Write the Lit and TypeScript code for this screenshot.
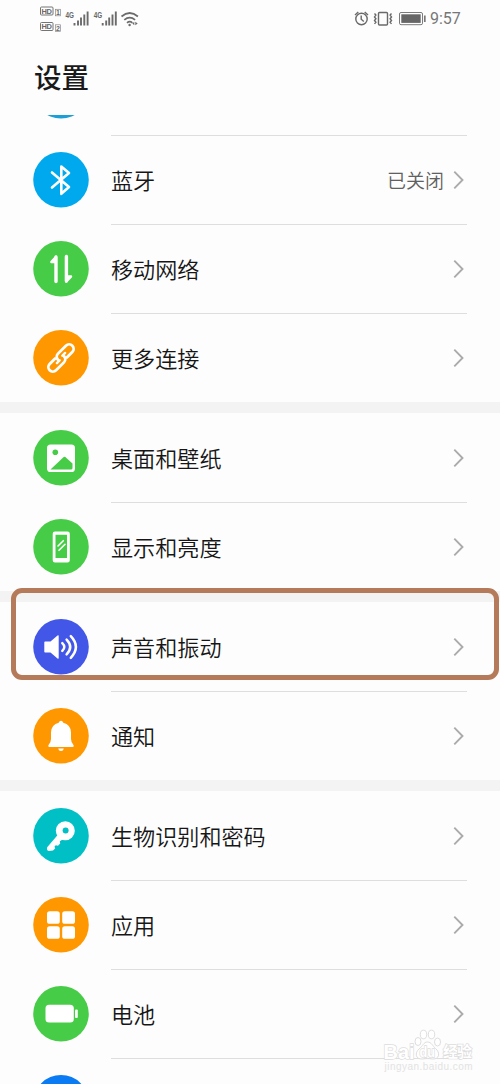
import { LitElement, html, svg, css, nothing } from "lit";
import { customElement, property } from "lit/decorators.js";

const glyphs: Record<string, unknown> = {
  none: nothing,
  bluetooth: svg`<path d="M19 20.5 36 35 28.3 41.8V14.5L36 21 19 35.5" fill="none" stroke="#fff" stroke-width="2.6" stroke-linejoin="round" stroke-linecap="round"/>`,
  mobile: svg`<path d="M23 16V40.500M33.400 15.500V40" fill="none" stroke="#fff" stroke-width="3.400" stroke-linecap="round"/><path d="M17.200 21.300Q17 20.500 17.800 19.800L22.400 14.800Q23.500 14 24 15V22.200H18.200Q17.400 22.200 17.200 21.300ZM39.200 35.200Q39.400 36 38.600 36.700L34 41.600Q32.900 42.400 32.400 41.400V34.300H38.200Q39 34.300 39.200 35.200Z" fill="#fff"/>`,
  link: svg`<g transform="rotate(-45 28 28)" fill="none" stroke="#fff" stroke-width="2.800" stroke-linecap="round"><path d="M23.500 24.200H15.800a4.500 4.500 0 0 0 0 9H27a4.500 4.500 0 0 0 4.400-4.300"/><path d="M32.500 31.800H40.200a4.500 4.500 0 0 0 0-9H29a4.500 4.500 0 0 0-4.400 4.300"/><path d="M21.500 28.700h4M30.500 27.300h4" stroke-width="2.400"/></g>`,
  picture: svg`<rect x="14" y="14.500" width="28" height="27.500" rx="3.600" fill="#fff"/><circle cx="22.300" cy="22.300" r="2.800" fill="#47cc47"/><path d="M17.500 39.500 30.700 27Q31.500 26.300 32.300 27L39.500 33.400V38q0 1.500-1.500 1.500Z" fill="#47cc47"/>`,
  phone: svg`<path fill-rule="evenodd" d="M22 12.500h12.500a2.300 2.300 0 0 1 2.300 2.300v26.400a2.300 2.300 0 0 1-2.300 2.300H22a2.300 2.300 0 0 1-2.300-2.300V14.800a2.300 2.300 0 0 1 2.300-2.300ZM22.500 15.800V39h11.500V15.800Z" fill="#fff"/><path d="m25 27 5.300-5.300M26 31.300l6-6" stroke="#fff" stroke-width="1.600" stroke-linecap="round"/>`,
  sound: svg`<path d="M11.300 23.200q0-.8.8-.8h5.400l7-5.800q1.200-.8 1.200.5v21.800q0 1.300-1.200.5l-7-5.800h-5.400q-.8 0-.8-.8Z" fill="#fff"/><path d="M29.300 24.100q4 3.900 0 7.800M33.600 20.600q7.200 7.400 0 14.800M37.800 17.200q10.200 10.800 0 21.600" fill="none" stroke="#fff" stroke-width="2.500" stroke-linecap="round"/>`,
  bell: svg`<path d="M28 12.800q1.600 0 2.300 1.900 7.200 1.700 7.700 9.500V31q0 3.500 2.600 6.300.7 1.500-.9 1.700H16.300q-1.600-.2-.9-1.700Q18 34.500 18 31v-6.800q.5-7.800 7.700-9.500.7-1.900 2.300-1.900ZM25.200 40.500h5.600q-.4 2.500-2.800 2.500t-2.800-2.500Z" fill="#fff"/>`,
  key: svg`<path d="M14.200 39.300 25.500 26 30.500 31 26.800 33.200 27.200 35.400 25 37.800 22.800 37.300 21.500 38.600 22.200 40.400 20 42.600 15.600 43Q13.300 42.300 14.200 39.300Z" fill="#fff"/><circle cx="32.300" cy="22.800" r="9.500" fill="#fff"/><circle cx="32.600" cy="22.400" r="3" fill="#00c0c6"/>`,
  apps: svg`<g fill="#fff"><rect x="14" y="14.300" width="12.800" height="12.500" rx="2.600"/><rect x="29.200" y="14.300" width="12.800" height="12.500" rx="2.600"/><rect x="14" y="29.300" width="12.800" height="12.500" rx="2.600"/><rect x="29.200" y="29.300" width="12.800" height="12.500" rx="2.600"/></g>`,
  battery: svg`<rect x="12.500" y="18.800" width="28.300" height="17.800" rx="3.600" fill="#fff"/><rect x="42" y="23.500" width="2.800" height="8.600" rx="1" fill="#fff"/>`,
};

@customElement("settings-row")
class SettingsRow extends LitElement {
  @property() label = "";
  @property() value = "";
  @property() icon = "none";
  @property() color = "#00a9ee";
  @property({ type: Boolean }) divided = false;

  static styles = css`
    :host { display: flex; height: 89px; flex: none; padding: 0 33px; }
    .disc { flex: none; align-self: center; width: 56px; height: 56px; display: block; margin-right: 22px; }
    .body { flex: 1; display: flex; align-items: center; box-sizing: border-box; border-top: 1px solid transparent; }
    .divided { border-top-color: #dedede; }
    .label { flex: 1; font-size: 22.1px; line-height: 32px; font-weight: 350; color: #161616; white-space: nowrap; padding-bottom: 3px; }
    .value { font-size: 19px; line-height: 28px; font-weight: 350; color: #606060; margin-right: 9px; }
    .chevron { display: block; width: 12px; height: 20px; margin: 0 2px 1px 0; }
  `;

  render() {
    return html`
      <svg class="disc" viewBox="0 0 56 56">
        <circle cx="28" cy="27.800" r="27.800" fill=${this.color} />
        ${glyphs[this.icon]}
      </svg>
      <div class="body ${this.divided ? "divided" : ""}">
        <span class="label">${this.label}</span>
        ${this.value ? html`<span class="value">${this.value}</span>` : nothing}
        <svg class="chevron" viewBox="0 0 12 20">
          <path d="M1.300 1.700 9.500 10 1.300 18.300" fill="none" stroke="#ababab" stroke-width="1.900" />
        </svg>
      </div>
    `;
  }
}

interface Item { label: string; icon: string; color: string; value?: string }

const green = "#47cc47";
const orange = "#ff9800";
const groups: Item[][] = [
  [
    { label: "", icon: "none", color: "#1b9fd5" },
    { label: "蓝牙", icon: "bluetooth", color: "#00a9ee", value: "已关闭" },
    { label: "移动网络", icon: "mobile", color: green },
    { label: "更多连接", icon: "link", color: orange },
  ],
  [
    { label: "桌面和壁纸", icon: "picture", color: green },
    { label: "显示和亮度", icon: "phone", color: green },
  ],
  [
    { label: "声音和振动", icon: "sound", color: "#4256e8" },
    { label: "通知", icon: "bell", color: orange },
  ],
  [
    { label: "生物识别和密码", icon: "key", color: "#00c0c6" },
    { label: "应用", icon: "apps", color: orange },
    { label: "电池", icon: "battery", color: green },
    { label: "", icon: "none", color: "#0a7bf2" },
  ],
];

@customElement("app-root")
class AppRoot extends LitElement {
  static styles = css`
    :host {
      display: flex; flex-direction: column; position: relative; width: 500px; height: 1084px;
      overflow: hidden; background: #fdfdfd; font-family: "Noto Sans CJK SC", sans-serif;
    }
    .status { flex: none; height: 38px; display: flex; justify-content: space-between; padding: 0 39px 0 39px; }
    .status svg { display: block; height: 38px; }
    .clock { display: flex; }
    .time { font: 16px/38px Roboto, sans-serif; color: #777; margin-left: 4px; width: 31px; white-space: nowrap; }
    .tiny { font-family: "Liberation Sans", sans-serif; font-weight: bold; fill: #696969; }
    h1 { flex: none; box-sizing: border-box; height: 77px; margin: 0; padding: 18px 0 0 34px; font-size: 27.5px; line-height: 40px; font-weight: 500; color: #1a1a1a; }
    .list { flex: 1; min-height: 0; overflow: hidden; display: flex; flex-direction: column; }
    .group { flex: none; display: flex; flex-direction: column; }
    .group:first-child { margin-top: -69px; }
    .gap { flex: none; height: 11px; background: #f3f3f3; }
    .highlight { position: absolute; left: 11px; top: 588px; width: 488px; height: 92px; box-sizing: border-box; border: 5px solid #b47a5a; border-radius: 11px; }
    .watermark { position: absolute; left: 380px; top: 1026px; width: 100px; height: 50px; }
    .mark { font-family: "Liberation Sans", "Noto Sans CJK SC", sans-serif; fill: #fff; stroke: #dcdcdc; stroke-width: 1.4; paint-order: stroke; }
    .site { font-family: "Liberation Sans", sans-serif; fill: #e3e3e3; }
  `;

  render() {
    return html`
      <div class="status">
        <svg width="104" viewBox="39 0 104 38">
          <g fill="none" stroke="#747474" stroke-width="1">
            <rect x="40.500" y="7" width="12.500" height="8" rx="1" />
            <rect x="40.500" y="22.500" width="12.500" height="8" rx="1" />
          </g>
          <g class="tiny">
            <text x="41.500" y="13.700" font-size="7.500" textLength="10.500">HD</text>
            <text x="41.500" y="29.200" font-size="7.500" textLength="10.500">HD</text>
            <text x="56" y="15.300" font-size="7">1</text>
            <text x="56" y="30.800" font-size="7">2</text>
            <text x="65.500" y="18" font-size="8.500" textLength="8.500" lengthAdjust="spacingAndGlyphs">4G</text>
            <text x="93.700" y="18" font-size="8.500" textLength="8.500" lengthAdjust="spacingAndGlyphs">4G</text>
          </g>
          <g fill="none" stroke="#888" stroke-width=".7"><rect x="55.500" y="9.300" width="5" height="6.500" /><rect x="55.500" y="24.800" width="5" height="6.500" /></g>
          <path d="M74.500 23v2.500M78 20.500v5M81 17.500v8M84.300 14.500v11M87.600 11.500v14M102.700 23v2.500M106.200 20.500v5M109.200 17.500v8M112.500 14.500v11M115.800 11.500v14" stroke="#6b6b6b" stroke-width="1.900" />
          <path d="M121.500 16.500q8.200-7 16.400 0M124.300 19.800q5.400-4.500 10.800 0M127 22.800q2.700-2.200 5.400 0" fill="none" stroke="#6b6b6b" stroke-width="1.700" />
          <circle cx="129.600" cy="25" r="1.200" fill="#6b6b6b" />
          <path d="m134.300 21.800-2 1.700 2 1.700zM135.300 21.800l2.400 1.700-2.400 1.700z" fill="#6b6b6b" />
        </svg>
        <div class="clock">
          <svg width="73" viewBox="353 0 73 38">
            <g fill="none" stroke="#696969" stroke-width="1.400">
              <circle cx="361.500" cy="19" r="5.700" />
              <path d="M361.200 15.500v3.800l2.600 2.200M355 15l3.300-3M368 15l-3.300-3" />
              <rect x="378.500" y="12.500" width="9" height="12.500" rx="1" />
              <path d="m374.500 13.500 1.400 1.600-1.400 1.800 1.400 1.800-1.400 1.800 1.400 1.800-1.400 1.600M391.500 13.500l-1.400 1.600 1.400 1.800-1.400 1.800 1.400 1.800-1.400 1.800 1.400 1.600" />
            </g>
            <rect x="399.500" y="12.500" width="23" height="12.200" rx="1.500" fill="none" stroke="#7b7b7b" />
            <rect x="401.300" y="14.300" width="19.400" height="8.600" fill="#666" />
            <path d="M424.800 15.500v6.500" stroke="#777" stroke-width="1.700" />
          </svg>
          <span class="time">9:57</span>
        </div>
      </div>
      <h1>设置</h1>
      <div class="list">
        ${groups.map((group, g) => html`
          ${g ? html`<div class="gap"></div>` : nothing}
          <div class="group">
            ${group.map((item, i) => html`
              <settings-row .label=${item.label} .icon=${item.icon} .color=${item.color}
                .value=${item.value ?? ""} .divided=${i > 0}></settings-row>`)}
          </div>`)}
      </div>
      <div class="highlight"></div>
      <svg class="watermark" viewBox="380 1026 100 50">
        <g fill="#fff" stroke="#d9d9d9" stroke-width=".9">
          <ellipse cx="418" cy="1041.500" rx="3" ry="4" /><ellipse cx="423.500" cy="1034.500" rx="3.200" ry="4.300" />
          <ellipse cx="431.500" cy="1034.500" rx="3.200" ry="4.300" /><ellipse cx="437.500" cy="1042" rx="3" ry="4" />
          <path d="M427.500 1042c4 0 5 4 8 6.500 5 4 4 11-3 10.500-4-.6-6-.6-10 0-7 .5-8-6-3.500-10 4-3 4.500-7 8.500-7Z" />
        </g>
        <g class="mark">
          <text x="383.500" y="1058.500" font-size="20.500" font-weight="bold" textLength="31" lengthAdjust="spacingAndGlyphs">Bai</text>
          <text x="419.500" y="1056.500" font-size="14" font-weight="bold" textLength="15.500" lengthAdjust="spacingAndGlyphs">du</text>
          <text x="443" y="1056.500" font-size="15" font-weight="bold" textLength="29">经验</text>
        </g>
        <text class="site" x="384.500" y="1070" font-size="10" textLength="88">jingyan.baidu.com</text>
      </svg>
    `;
  }
}
